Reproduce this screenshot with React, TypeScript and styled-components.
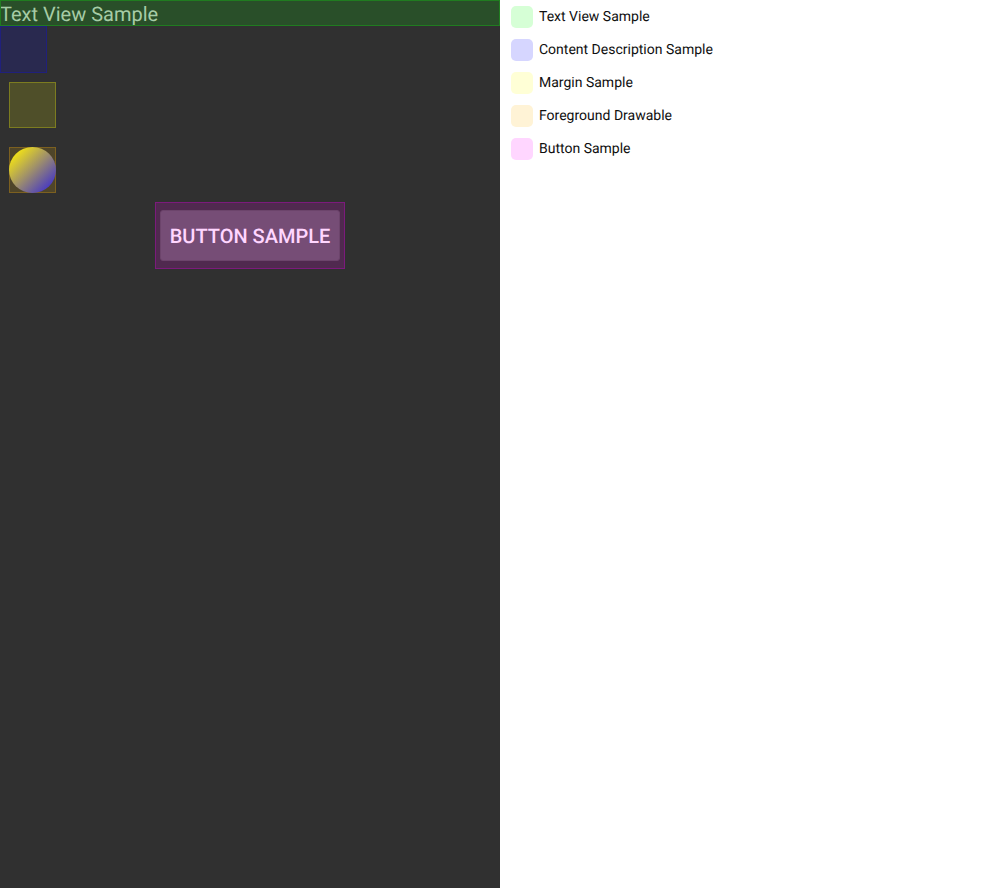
import React from "react";
import styled, { createGlobalStyle } from "styled-components";

const GlobalStyle = createGlobalStyle`
  *, *::before, *::after { box-sizing: border-box; }
  body {
    margin: 0;
    background: #ffffff;
    font-family: Roboto, "Liberation Sans", sans-serif;
    text-rendering: geometricPrecision;
  }
`;

const Page = styled.main`
  display: grid;
  grid-template-columns: 1fr 1fr;
  min-height: 100vh;
`;

const Device = styled.section`
  display: flex;
  flex-direction: column;
  align-items: flex-start;
  background: #303030;
`;

const TextView = styled.p`
  align-self: stretch;
  height: 26px;
  margin: 0;
  outline: 1px solid #207c20;
  outline-offset: -1px;
  background: #294f29;
  color: #a6cca6;
  font-size: 20px;
  line-height: 28px;
`;

const ViewBox = styled.div<{ $fill: string; $line: string }>`
  width: 47px;
  height: 47px;
  border: 1px solid ${({ $line }) => $line};
  background: ${({ $fill }) => $fill};
`;

const SpacedBox = styled(ViewBox)`
  width: 47px;
  height: 46px;
  margin: 9px;
`;

const DrawableBox = styled(SpacedBox)`
  margin-top: 10px;
`;

const Circle = styled.div`
  height: 46px;
  margin: -1px;
  border-radius: 50%;
  background: linear-gradient(135deg, #f0e018 14%, #4638c4 88%);
`;

const ButtonBounds = styled.div`
  align-self: center;
  padding: 7px 4px;
  border: 1px solid #7c1a7c;
  background: #50294f;
`;

const SampleButton = styled.button`
  display: block;
  width: 180px;
  height: 51px;
  padding: 0;
  border: 1px solid #6c446b;
  border-radius: 3px;
  background: #764d76;
  color: #ffd6ff;
  font-family: inherit;
  font-size: 20px;
  font-weight: 500;
  line-height: 24px;
  text-rendering: inherit;
  text-transform: uppercase;
`;

const Legend = styled.ul`
  display: flex;
  flex-direction: column;
  gap: 11px;
  margin: 0;
  padding: 6px 11px;
  list-style: none;
`;

const LegendItem = styled.li`
  display: flex;
  gap: 6px;
  color: #101010;
  font-size: 14px;
  line-height: 22px;
`;

const Swatch = styled.span<{ $color: string }>`
  width: 22px;
  height: 22px;
  border-radius: 5px;
  background: ${({ $color }) => $color};
`;

const entries = [
  { name: "Text View Sample", color: "#d6ffd6" },
  { name: "Content Description Sample", color: "#d6d6ff" },
  { name: "Margin Sample", color: "#ffffd6" },
  { name: "Foreground Drawable", color: "#fff3d6" },
  { name: "Button Sample", color: "#ffd6ff" },
];

export default function App() {
  return (
    <Page>
      <GlobalStyle />
      <Device>
        <TextView>Text View Sample</TextView>
        <ViewBox $fill="#29294f" $line="#20207c" />
        <SpacedBox $fill="#4f4f29" $line="#7c7c20" />
        <DrawableBox $fill="#4f4529" $line="#7c6020">
          <Circle />
        </DrawableBox>
        <ButtonBounds>
          <SampleButton type="button">Button Sample</SampleButton>
        </ButtonBounds>
      </Device>
      <Legend>
        {entries.map(({ name, color }) => (
          <LegendItem key={name}>
            <Swatch $color={color} />
            {name}
          </LegendItem>
        ))}
      </Legend>
    </Page>
  );
}
